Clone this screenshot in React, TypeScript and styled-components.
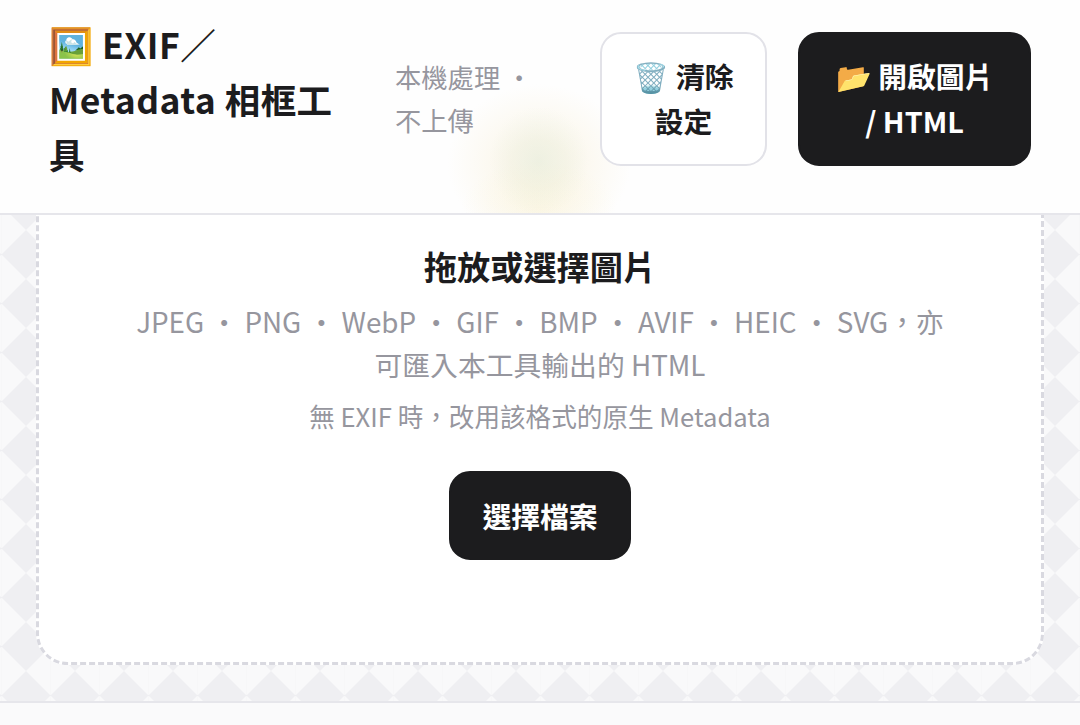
import styled, { createGlobalStyle } from 'styled-components'

const GlobalStyle = createGlobalStyle`
  html, body {
    margin: 0;
    padding: 0;
    height: 100%;
    overflow: hidden;
    background: #fafafb;
    font-family: 'Noto Sans CJK TC', 'Noto Sans', sans-serif;
    color: #1c1c1e;
  }
  * { box-sizing: border-box; }
`;

const Header = styled.header`
  position: relative;
  display: flex;
  align-items: center;
  height: 215px;
  padding: 0 49px 16px 50px;
  background: #fefefe;
  border-bottom: 2px solid #e6e6eb;
  overflow: hidden;
`;

const BlurredPreview = styled.div`
  position: absolute;
  left: 446px;
  top: 84px;
  width: 186px;
  height: 160px;
  background:
    radial-gradient(ellipse 50px 54px at 50% 48%, rgba(208, 226, 204, 0.3), transparent 100%),
    radial-gradient(ellipse 78px 48px at 50% 78%, rgba(250, 241, 205, 0.36), transparent 100%),
    radial-gradient(ellipse 92px 80px at 50% 50%, rgba(250, 244, 228, 0.75) 30%, transparent 100%);
`;

const Title = styled.h1`
  position: relative;
  width: 290px;
  margin: 0 56px 0 -1px;
  flex: none;
  font-size: 35.5px;
  line-height: 55px;
  font-weight: 700;
  letter-spacing: 0.42px;
`;

const Note = styled.div`
  position: relative;
  width: 148px;
  margin-right: 57px;
  flex: none;
  font-size: 26.3px;
  line-height: 42.5px;
  color: #96969e;
`;

const Button = styled.button<{ $dark?: boolean }>`
  font-family: inherit;
  font-size: 28.8px;
  line-height: 45px;
  font-weight: 700;
  border-radius: 21px;
  color: ${p => (p.$dark ? '#fff' : '#1c1c1e')};
  background: ${p => (p.$dark ? '#1c1c1e' : '#fff')};
  border: 2.6px solid ${p => (p.$dark ? '#1c1c1e' : '#e2e2e8')};
`;

const HeaderButton = styled(Button)<{ $width: number }>`
  position: relative;
  flex: none;
  width: ${p => p.$width}px;
  height: 134px;
  padding: 0 30px 2px;
  & + & {
    margin-left: 31px;
  }
`;

const Main = styled.main`
  height: 488px;
  padding: 0 36px 38px;
  border-bottom: 2px solid #e6e6eb;
  background-color: #efeff2;
  background-image:
    linear-gradient(45deg, #f9f9fa 25%, transparent 25%),
    linear-gradient(-45deg, #f9f9fa 25%, transparent 25%),
    linear-gradient(135deg, #f9f9fa 25%, transparent 25%),
    linear-gradient(-135deg, #f9f9fa 25%, transparent 25%);
  background-size: 49px 49px;
  background-position: 1.5px 15px;
`;

const DropZone = styled.section`
  position: relative;
  display: flex;
  flex-direction: column;
  align-items: center;
  height: 450px;
  padding-top: 28px;
  background: #fff;
  border-radius: 0 0 31px 31px;
  text-align: center;
`;

const DashedEdge = styled.svg`
  position: absolute;
  inset: 0;
  width: 100%;
  height: 100%;
  pointer-events: none;
`;

const DropTitle = styled.h2`
  margin: 0 0 11px;
  font-size: 33.2px;
  line-height: 46px;
  font-weight: 700;
`;

const Formats = styled.p`
  width: 830px;
  margin: 0 0 10px;
  font-size: 27.8px;
  line-height: 43px;
  color: #96969e;
`;

const Hint = styled.p`
  margin: 0 0 35px;
  font-size: 25.6px;
  line-height: 40px;
  color: #96969e;
`;

const PickButton = styled(Button)`
  width: 182px;
  height: 89px;
`;

export default function App() {
  return (
    <>
      <GlobalStyle />
      <Header>
        <BlurredPreview />
        <Title>🖼️ EXIF／Metadata 相框工具</Title>
        <Note>本機處理 ・ 不上傳</Note>
        <HeaderButton $width={167}>🗑️ 清除設定</HeaderButton>
        <HeaderButton $dark $width={233}>📂 開啟圖片 / HTML</HeaderButton>
      </Header>
      <Main>
        <DropZone>
          <DashedEdge viewBox="0 0 1008 450">
            <rect x="1.5" y="-40" width="1005" height="488.5" rx="30" fill="none" stroke="#d9d9e0" strokeWidth="3" strokeDasharray="6 3" />
          </DashedEdge>
          <DropTitle>拖放或選擇圖片</DropTitle>
          <Formats>JPEG ・ PNG ・ WebP ・ GIF ・ BMP ・ AVIF ・ HEIC ・ SVG，亦可匯入本工具輸出的 HTML</Formats>
          <Hint>無 EXIF 時，改用該格式的原生 Metadata</Hint>
          <PickButton $dark>選擇檔案</PickButton>
        </DropZone>
      </Main>
    </>
  )
}
